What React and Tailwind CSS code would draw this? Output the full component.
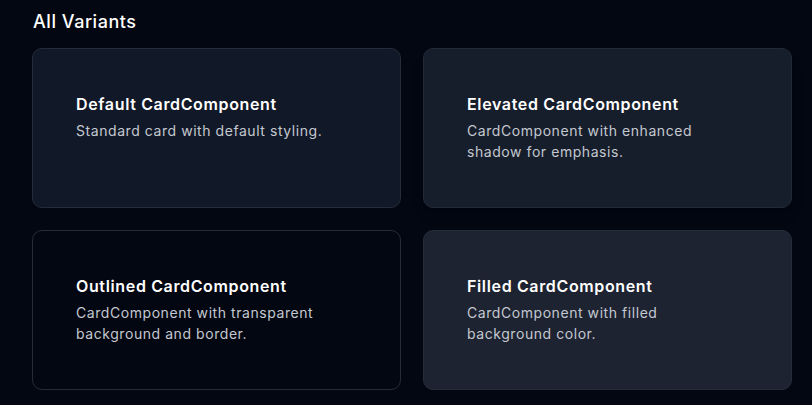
export default function App() {
  const cards = [
    { t: "Default CardComponent", d: "Standard card with default styling.", c: "bg-[#111827] border-[#252d3a]" },
    { t: "Elevated CardComponent", d: "CardComponent with enhanced shadow for emphasis.", c: "bg-[#171e2b] border-[#222a37] shadow-lg" },
    { t: "Outlined CardComponent", d: "CardComponent with transparent background and border.", c: "bg-transparent border-[#252c38]" },
    { t: "Filled CardComponent", d: "CardComponent with filled background color.", c: "bg-[#1d2330] border-[#262d3a]" },
  ];
  return (
    <div className="min-h-[405px] w-[812px] bg-[#030712] text-white pl-8 pr-5 pt-[11px]" style={{ fontFamily: "Inter, 'Noto Sans', sans-serif" }}>
      <h2 className="text-lg font-medium leading-[22px] mb-[15px] pl-px tracking-[0.03em]">All Variants</h2>
      <div className="grid grid-cols-2 gap-[22px]">
        {cards.map((x) => (
          <div key={x.t} className={`h-[160px] rounded-[10px] border ${x.c} pl-[43px] pr-10 pt-[43px]`}>
            <div className="text-base font-semibold leading-6 text-white tracking-[0.04em]">{x.t}</div>
            <p className="mt-[4px] text-sm leading-[21px] text-[#c4c8d0] max-w-[260px] tracking-[0.04em]">{x.d}</p>
          </div>
        ))}
      </div>
    </div>
  );
}
